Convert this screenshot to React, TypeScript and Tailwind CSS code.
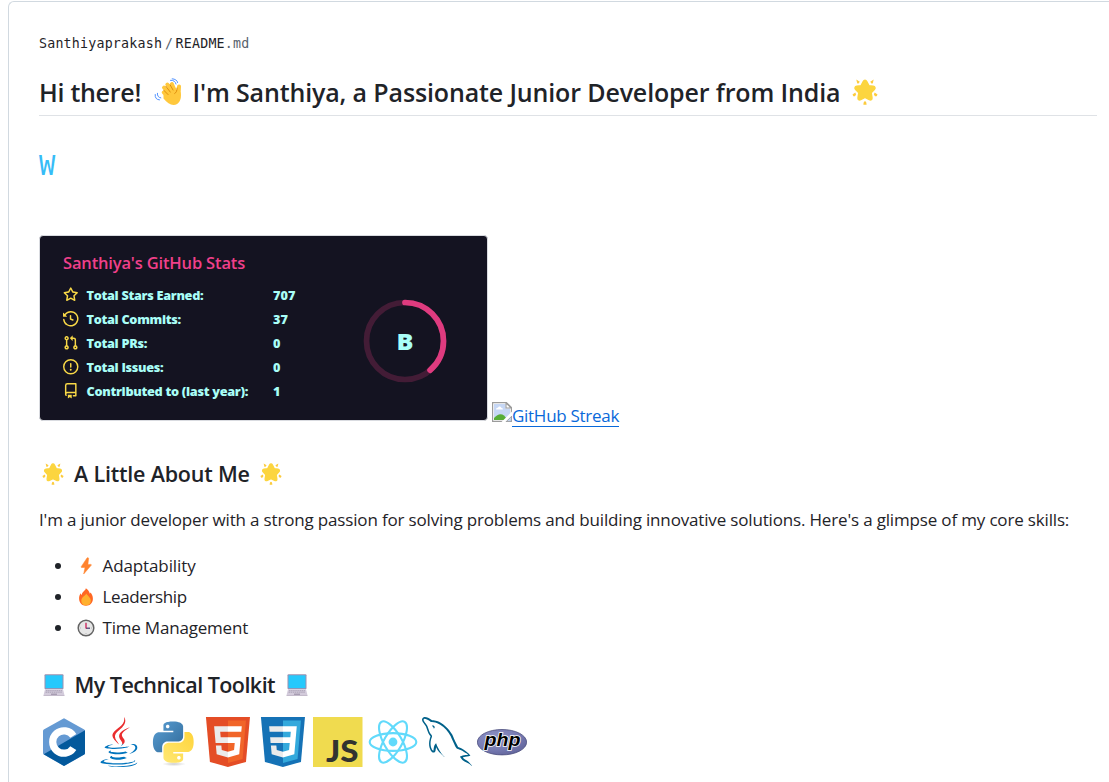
import type { ReactNode } from "react";
import { FaJava } from "react-icons/fa";
import { GrMysql } from "react-icons/gr";

function GlowingStar({ className }: { className: string }) {
  return (
    <svg viewBox="0 0 26 26" className={className}>
      <path
        d="M13 1.2c.8 0 1.3.5 1.700 1.300l2.100 4.200 4.400.7c1.800.3 2.300 1.900 1.100 3.100l-3.200 3.300.8 4.800c.3 1.900-1 2.800-2.600 2L13 18.400l-4.300 2.200c-1.600.8-2.900-.1-2.600-2l.8-4.800-3.200-3.300c-1.200-1.200-.7-2.800 1.100-3.100l4.400-.7 2.100-4.200c.4-.8.9-1.300 1.700-1.300z"
        fill="#fcd53f"
        stroke="#fcd53f"
        strokeWidth="1.600"
      />
      <g fill="#fccb3d">
        <path d="M4.300.6 7.800 2.800 6.200 4.700 5.200 4.300Z" />
        <path d="M21.700.6 18.200 2.800 19.800 4.700 20.800 4.300Z" />
        <path d="M.5 15.500 3.300 13.600 4.100 15.400 3 17.200 1.400 17.300Z" />
        <path d="M25.500 15.500 22.700 13.600 21.900 15.400 23 17.200 24.600 17.300Z" />
        <path d="M13 22.200c.9 0 1.500 1.100 1.600 3.500h-3.200c.1-2.400.7-3.500 1.600-3.500z" />
      </g>
    </svg>
  );
}

function WavingHand({ className }: { className: string }) {
  return (
    <svg viewBox="0 0 28 28" className={className}>
      <g fill="none" stroke="#ffc83d" strokeLinecap="round">
        <path d="M9.700 14.500 16 21M10 9.600 17 17M13.300 6.500 19 14M17.900 6 21 13" strokeWidth="3.900" />
        <path d="M25 8.500 24.600 16" strokeWidth="4" />
      </g>
      <path d="M9.500 17 17.500 9.500 24 12.500 26.700 14.500C28 21 25 27 19.500 27 16 27 13 24.500 9.500 20.500Z" fill="#ffc83d" />
      <g fill="none" stroke="#d67d00" strokeWidth=".8" strokeLinecap="round">
        <path d="m9.800 12.300 4.300 4.300M11.900 8.300l4.400 5.800M16.100 6.800l2.900 5.200M23 10c0 3-.5 4.300-2.300 5.500" />
      </g>
      <g fill="none" stroke="#5092ff" strokeWidth="1" strokeLinecap="round">
        <path d="M16.500 2.300c3-.3 5 1.300 5.500 3.700M18.200.8c3 .2 5 1.500 5.400 3.700M1.200 16.500c-.4 3.300 1.300 5.300 4.300 5.400M3.400 15.300c-.2 2.600 1 4.200 3.400 4.600" />
      </g>
    </svg>
  );
}

function Laptop() {
  return (
    <svg viewBox="0 0 22 22" className="h-[22px] w-[22px]">
      <rect x="1.500" y=".3" width="19" height="15" rx="1" fill="#9a90b0" />
      <rect x="2.500" y="1.300" width="17" height="12.800" fill="#26c9fc" />
      <path d="M2 15.300h18l1.300 5.200v1.200H.7v-1.200z" fill="#d3cbdb" />
      <path d="M3 16.700h16M2.600 18.200h16.800" stroke="#a79eb2" strokeWidth=".9" strokeDasharray="1.500 .6" />
      <path d="M8 20.200h6" stroke="#998ea4" strokeWidth="1.100" />
      <path d="M.5 21.600h21" stroke="#b4abbd" strokeWidth=".7" />
    </svg>
  );
}

function Bolt() {
  return (
    <svg viewBox="0 0 18 18" className="h-[18px] w-[18px]">
      <path d="M10 1 4.200 9.700c-.2.400 0 .8.500.8H8L6.700 17l7.500-8.700c.3-.4.100-.9-.4-.9h-2.900l.7-6c.1-.7-1.100-1.100-1.600-.4z" fill="#ff822d" stroke="#ff822d" strokeWidth=".5" />
    </svg>
  );
}

function Fire() {
  return (
    <svg viewBox="0 0 18 18" className="h-[18px] w-[18px]">
      <path d="M8.800.2c.1 2-3.500 3.500-3.900 6L4.400 7 3.700 5.200C2.600 6.800 2 8.600 2.100 10.800 2.200 15 5 17.800 9 17.800s6.900-2.800 6.900-7c0-2.800-1-4.600-2.400-6.300l-.6 1.200C12.200 3.200 10.800 1.400 8.800.2z" fill="#ff6723" />
      <path d="M9.300 5.500C8.700 7.700 4.300 8.800 4.300 13c0 2.700 2 4.500 4.700 4.500s4.800-1.900 4.800-4.700c0-3.500-3-4.500-4.500-7.300z" fill="#ffb02e" />
    </svg>
  );
}

function Clock() {
  return (
    <svg viewBox="0 0 18 18" className="h-[18px] w-[18px]">
      <circle cx="9" cy="9" r="7.800" fill="#e6e6e6" stroke="#636363" strokeWidth="1.500" />
      <path d="M9 3.200v.8M9 14v.8M3.200 9H4M14 9h.8" stroke="#9b9b9b" strokeWidth=".8" />
      <path d="M9 9.200h4" stroke="#433b6b" strokeWidth="1.200" />
      <path d="M9 9.500V4" stroke="#ca0b4a" strokeWidth="1.200" />
    </svg>
  );
}

function BrokenImage() {
  return (
    <svg viewBox="0 0 20 20" className="h-5 w-5 shrink-0">
      <path d="M.6.6h13.800l5 5v13.800H.6z" fill="#fff" stroke="#9b9b9b" strokeWidth="1.200" />
      <path d="M2 2h11.500v4.500H18V18H2z" fill="#c6d7f5" />
      <path d="M4 7.500c0-1.300 1-2 2-1.800.5-1.500 2.700-1.500 3.200 0 1.200 0 1.700.7 1.700 1.800z" fill="#fff" />
      <path d="M2 18v-2c3.500-4 7-5 10-2.500L16 18z" fill="#57ad37" />
      <path d="M14 1v5h5.200z" fill="#fff" stroke="#9b9b9b" strokeWidth="1.100" />
      <path d="M20 9.500 9.500 20h4L20 13.500z" fill="#fff" />
      <path d="M14.500 19.400h4.900v-4.900z" fill="#c6d7f5" stroke="#9b9b9b" strokeWidth=".8" />
    </svg>
  );
}

const stats: { label: string; value: string; icon: string }[] = [
  {
    label: "Total Stars Earned:",
    value: "707",
    icon: "M8 .25a.75.75 0 01.673.418l1.882 3.815 4.21.612a.75.75 0 01.416 1.279l-3.046 2.97.719 4.192a.75.75 0 01-1.088.791L8 12.347l-3.766 1.98a.75.75 0 01-1.088-.79l.72-4.194L.818 6.374a.75.75 0 01.416-1.28l4.21-.611L7.327.668A.75.75 0 018 .25zm0 2.445L6.615 5.5a.75.75 0 01-.564.41l-3.097.45 2.24 2.184a.75.75 0 01.216.664l-.528 3.084 2.769-1.456a.75.75 0 01.698 0l2.77 1.456-.53-3.084a.75.75 0 01.216-.664l2.24-2.183-3.096-.45a.75.75 0 01-.564-.41L8 2.694v.001z",
  },
  {
    label: "Total Commits:",
    value: "37",
    icon: "M1.643 3.143L.427 1.927A.25.25 0 000 2.104V5.75c0 .138.112.25.25.25h3.646a.25.25 0 00.177-.427L2.715 4.215a6.5 6.5 0 11-1.18 4.458.75.75 0 10-1.493.154 8.001 8.001 0 101.6-5.684zM7.75 4a.75.75 0 01.75.75v2.992l2.028.812a.75.75 0 01-.557 1.392l-2.5-1A.75.75 0 017 8.25v-3.5A.75.75 0 017.75 4z",
  },
  {
    label: "Total PRs:",
    value: "0",
    icon: "M7.177 3.073L9.573.677A.25.25 0 0110 .854v4.792a.25.25 0 01-.427.177L7.177 3.427a.25.25 0 010-.354zM3.75 2.5a.75.75 0 100 1.5.75.75 0 000-1.5zm-2.25.75a2.25 2.25 0 113 2.122v5.256a2.251 2.251 0 11-1.5 0V5.372A2.25 2.25 0 011.5 3.25zM11 2.5h-1V4h1a1 1 0 011 1v5.628a2.251 2.251 0 101.5 0V5A2.5 2.5 0 0011 2.5zm1 10.25a.75.75 0 111.5 0 .75.75 0 01-1.5 0zM3.75 12a.75.75 0 100 1.5.75.75 0 000-1.5z",
  },
  {
    label: "Total Issues:",
    value: "0",
    icon: "M8 1.5a6.5 6.5 0 100 13 6.5 6.5 0 000-13zM0 8a8 8 0 1116 0A8 8 0 010 8zm9 3a1 1 0 11-2 0 1 1 0 012 0zm-.25-6.25a.75.75 0 00-1.5 0v3.5a.75.75 0 001.5 0v-3.5z",
  },
  {
    label: "Contributed to (last year):",
    value: "1",
    icon: "M2 2.5A2.5 2.5 0 014.5 0h8.75a.75.75 0 01.75.75v12.5a.75.75 0 01-.75.75h-2.5a.75.75 0 110-1.5h1.75v-2h-8a1 1 0 00-.714 1.7.75.75 0 01-1.072 1.05A2.495 2.495 0 012 11.5v-9zm10.5-1V9h-8c-.356 0-.694.074-1 .208V2.5a1 1 0 011-1h8zM5 12.25v3.25a.25.25 0 00.4.2l1.45-1.087a.25.25 0 01.3 0L8.600 15.700a.25.25 0 00.4-.2v-3.250a.25.25 0 00-.25-.25h-3.500a.25.25 0 00-.25.25z",
  },
];

function StatsCard() {
  return (
    <div className="flex h-[186px] w-[449px] shrink-0 rounded-[4px] border border-[#d9dbe0] bg-[#141321] pl-[23px]">
      <div className="w-[294px] pt-4">
        <h4 className="h-[22px] whitespace-nowrap text-[16.500px] leading-[22px] font-semibold tracking-[-0.160px] text-[#f0408a]">
          Santhiya's GitHub Stats
        </h4>
        <ul className="pt-[9px]">
          {stats.map((s) => (
            <li
              key={s.label}
              className="flex h-6 items-center whitespace-nowrap text-[12.700px] leading-6 font-extrabold text-[#a9fef7]"
            >
              <svg viewBox="0 0 16 16" className="mr-2 h-[15.500px] w-[15.500px] shrink-0 fill-[#f8d847]" fillRule="evenodd">
                <path d={s.icon} />
              </svg>
              <span className="w-[186.500px] tracking-[-0.300px]">{s.label}</span>
              <span className="tracking-[0.100px]">{s.value}</span>
            </li>
          ))}
        </ul>
      </div>
      <svg viewBox="0 0 90 90" className="mt-[60px] ml-[2.500px] h-[90px] w-[90px]">
        <circle cx="45" cy="45" r="38.500" fill="none" stroke="#fe428e" strokeWidth="5.700" opacity=".2" />
        <circle
          cx="45"
          cy="45"
          r="38.500"
          fill="none"
          stroke="#fe428e"
          strokeWidth="5.700"
          strokeLinecap="round"
          strokeDasharray="93.500 300"
          transform="rotate(-90 45 45)"
          opacity=".84"
        />
        <text
          x="45"
          y="54"
          textAnchor="middle"
          textLength="17"
          lengthAdjust="spacingAndGlyphs"
          className="fill-[#a9fef7] font-['Open_Sans',sans-serif] text-[22.500px] font-extrabold"
        >
          B
        </text>
      </svg>
    </div>
  );
}

function CLogo() {
  return (
    <svg viewBox="0 0 50 50" className="h-[50px] w-[50px]">
      <path d="M25 1.300 45.200 12.500Q46 13 46 14V36q0 1-.8 1.500L25 49 4.800 37.500Q4 37 4 36V14q0-1 .8-1.500z" fill="#659ad3" />
      <path d="M46 13.300V36q0 1-.8 1.500L25 49 4.700 37.200z" fill="#03599c" />
      <path d="M34.300 18.900A11.200 11.200 0 1 0 34.300 31.100" fill="none" stroke="#fff" strokeWidth="7.200" />
    </svg>
  );
}

function JavaLogo() {
  return (
    <div className="grid h-[50px] w-[50px] place-items-center">
      <FaJava className="col-start-1 row-start-1 h-[50px] w-[38px] text-[#0074bd] [clip-path:polygon(0_49%,32%_49%,52%_56%,66%_53%,80%_46%,100%_46%,100%_100%,0_100%)]" />
      <FaJava className="col-start-1 row-start-1 h-[50px] w-[38px] text-[#ea2d2e] [clip-path:polygon(0_0,100%_0,100%_45%,80%_46%,66%_53%,52%_56%,32%_49%,0_48%)]" />
    </div>
  );
}

function PythonLogo() {
  return (
    <svg viewBox="0 0 50 50" className="h-[50px] w-[50px]">
      <defs>
        <linearGradient id="pyBlue" x1="0" y1="0" x2="1" y2="1">
          <stop offset="0" stopColor="#5a9fd4" />
          <stop offset="1" stopColor="#306998" />
        </linearGradient>
        <linearGradient id="pyYellow" x1="0" y1="1" x2="1" y2="0">
          <stop offset="0" stopColor="#ffe873" />
          <stop offset="1" stopColor="#ffd43b" />
        </linearGradient>
        <radialGradient id="pyShadow">
          <stop offset="0" stopColor="#b8b8b8" stopOpacity=".7" />
          <stop offset="1" stopColor="#b8b8b8" stopOpacity="0" />
        </radialGradient>
      </defs>
      <ellipse cx="25" cy="47" rx="12" ry="2.200" fill="url(#pyShadow)" />
      <g transform="translate(4 4.500) scale(1.690 1.720)">
        <path
          fill="url(#pyBlue)"
          d="M14.250.18l.9.2.73.26.59.3.45.32.34.34.25.34.16.33.1.3.04.26.02.2-.01.13V8.500l-.05.63-.13.55-.21.46-.26.38-.3.31-.33.25-.35.19-.35.14-.33.1-.3.07-.26.04-.21.02H8.770l-.69.05-.59.14-.5.22-.41.27-.33.32-.27.35-.2.36-.15.37-.1.35-.07.32-.04.27-.02.21v3.060H3.170l-.21-.03-.28-.07-.32-.12-.35-.18-.36-.26-.36-.36-.35-.46-.32-.59-.28-.73-.21-.88-.14-1.050-.05-1.230.06-1.220.16-1.040.24-.87.32-.71.36-.57.4-.44.42-.33.42-.24.4-.16.36-.1.32-.05.24-.01h.16l.06.01h8.160v-.83H6.180l-.01-2.750-.02-.37.05-.34.11-.31.17-.28.25-.26.31-.23.38-.2.44-.18.51-.15.58-.12.64-.1.71-.06.77-.04.84-.02 1.270.05zm-6.300 1.980l-.23.33-.08.41.08.41.23.34.33.22.41.09.41-.09.33-.22.23-.34.08-.41-.08-.41-.23-.33-.33-.22-.41-.09-.41.09z"
        />
        <path
          fill="url(#pyYellow)"
          d="M21.040 6.110l.28.06.32.12.35.18.36.27.36.35.35.47.32.59.28.73.21.88.14 1.040.05 1.230-.06 1.230-.16 1.040-.24.86-.32.71-.36.57-.4.45-.42.33-.42.24-.4.16-.36.09-.32.05-.24.02-.16-.01h-8.220v.82h5.840l.01 2.760.02.36-.05.34-.11.31-.17.29-.25.25-.31.24-.38.2-.44.17-.51.15-.58.13-.64.09-.71.07-.77.04-.84.01-1.270-.04-1.070-.14-.9-.2-.73-.25-.59-.3-.45-.33-.34-.34-.25-.34-.16-.33-.1-.3-.04-.25-.02-.2.01-.13v-5.340l.05-.64.13-.54.21-.46.26-.38.3-.32.33-.24.35-.2.35-.14.33-.1.3-.06.26-.04.21-.02.13-.01h5.840l.69-.05.59-.14.5-.21.41-.28.33-.32.27-.35.2-.36.15-.36.1-.35.07-.32.04-.28.02-.21V6.070h2.090l.14.01zm-6.470 14.250l-.23.33-.08.41.08.41.23.33.33.23.41.08.41-.08.33-.23.23-.33.08-.41-.08-.41-.23-.33-.33-.23-.41-.08-.41.08z"
        />
      </g>
    </svg>
  );
}

function HtmlLogo() {
  return (
    <svg viewBox="0 0 512 512" className="h-[50px] w-[50px]">
      <path fill="#e44d26" d="M71 460 30 0h451l-41 460-185 52z" />
      <path fill="#f16529" d="m256 472 149-41 35-394H256z" />
      <path fill="#ebebeb" d="M256 208h-75l-5-58h80V94H114l1 15 14 156h127zm0 147-64-17-4-45h-56l8 89 116 32z" />
      <path fill="#fff" d="M255 208v57h70l-7 73-63 17v59l116-32 1-10 13-149 2-15zm0-114v56h137l1-13 3-28 1-15z" />
    </svg>
  );
}

function CssLogo() {
  return (
    <svg viewBox="0 0 512 512" className="h-[50px] w-[50px]">
      <path fill="#1572b6" d="M71 460 30 0h451l-41 460-185 52z" />
      <path fill="#33a9dc" d="m256 472 149-41 35-394H256z" />
      <path fill="#ebebeb" d="M256 94H114l5 56h137zM256 208H124l5 57h127zm0 147-64-17-4-45h-56l8 89 116 32z" />
      <path fill="#fff" d="M255 94h142l-25 288-117 32v-59l63-17 7-73h-70v-57l76-1 5-57h-81z" />
    </svg>
  );
}

function JsLogo() {
  return (
    <svg viewBox="0 0 50 50" className="h-[50px] w-[50px]">
      <rect width="49.500" height="50" fill="#f0db4f" />
      <text
        x="13"
        y="45"
        textLength="32.500"
        lengthAdjust="spacingAndGlyphs"
        className="fill-[#323330] font-['Lato',sans-serif] text-[30.500px] font-black"
      >
        JS
      </text>
    </svg>
  );
}

function ReactLogo() {
  return (
    <svg viewBox="-25 -25 50 50" className="h-[50px] w-[50px]" fill="none" stroke="#61dafb" strokeWidth="2.100">
      <circle r="4.400" fill="#61dafb" stroke="none" />
      <ellipse rx="23.300" ry="8.900" />
      <ellipse rx="23.300" ry="8.900" transform="rotate(60)" />
      <ellipse rx="23.300" ry="8.900" transform="rotate(120)" />
    </svg>
  );
}

function PhpLogo() {
  return (
    <svg viewBox="0 0 50 50" className="h-[50px] w-[50px]">
      <defs>
        <radialGradient id="phpFill" cx=".35" cy=".3" r=".8">
          <stop offset="0" stopColor="#8d90c4" />
          <stop offset=".6" stopColor="#777bb3" />
          <stop offset="1" stopColor="#5f6298" />
        </radialGradient>
      </defs>
      <ellipse cx="25" cy="25.200" rx="24.600" ry="12.700" fill="url(#phpFill)" stroke="#4a4d7c" strokeWidth=".8" />
      <text
        x="7.500"
        y="29"
        textLength="36"
        lengthAdjust="spacingAndGlyphs"
        stroke="#fff"
        strokeWidth="1.600"
        paintOrder="stroke"
        className="fill-black font-['Liberation_Sans',sans-serif] text-[18.500px] font-bold italic"
      >
        php
      </text>
    </svg>
  );
}

function Skill({ icon, label, className }: { icon: ReactNode; label: string; className: string }) {
  return (
    <li className="flex h-[31px] items-center">
      <span className="mr-[15.500px] ml-4 h-[6px] w-[6px] rounded-full bg-[#1f2328]" />
      {icon}
      <span className={className}>{label}</span>
    </li>
  );
}

export default function App() {
  return (
    <div className="h-[782px] overflow-hidden bg-white pt-px pl-2 font-['Open_Sans','Noto_Sans',sans-serif] text-[#1f2328]">
      <main className="h-[790px] rounded-tl-[6px] border-t border-l border-[#d1d9e0] pt-[31px] pr-3 pl-[30px]">
        <div className="flex h-[22px] items-center font-['DejaVu_Sans_Mono',monospace] text-[13.300px] leading-[22px] tracking-[0.200px] text-[#59636e]">
          <span className="text-[#1f2328]">Santhiyaprakash</span>
          <span className="w-[13.500px] pl-[3px]">/</span>
          <span className="text-[#1f2328]">README</span>
          <span>.md</span>
        </div>

        <h1 className="mt-[13px] flex h-12 items-center whitespace-nowrap border-b border-[#dfe2e6] text-[25px] leading-[48px] font-semibold">
          <span className="w-[115px] tracking-[-0.280px]">Hi there!</span>
          <WavingHand className="h-[28px] w-[28px]" />
          <span className="w-[670px] pl-[10.500px] tracking-[-0.140px]">
            I'm Santhiya, a Passionate Junior Developer from India
          </span>
          <GlowingStar className="h-[26px] w-[26px]" />
        </h1>

        <p className="mt-5 h-[60px] font-['DejaVu_Sans_Mono',monospace] text-[27px] leading-[60px] text-[#36bcf7]">W</p>

        <div className="mt-[39px] flex items-end">
          <StatsCard />
          <a className="mb-[-6px] ml-1 flex h-[25px] text-[17px] whitespace-nowrap text-[#0969da]" href="#">
            <BrokenImage />
            <span className="h-[25px] border-b border-[#0969da] leading-[27px] tracking-[-0.280px]">GitHub Streak</span>
          </a>
        </div>

        <h2 className="mt-[39px] flex h-7 items-center whitespace-nowrap pl-[3px] text-[21.500px] leading-7 font-semibold">
          <GlowingStar className="h-[22px] w-[22px]" />
          <span className="w-[196px] pl-2.5 tracking-[-0.200px]">A Little About Me</span>
          <GlowingStar className="h-[22px] w-[22px]" />
        </h2>

        <p className="mt-[18px] h-7 text-[17px] leading-7 whitespace-nowrap tracking-[-0.166px]">
          I'm a junior developer with a strong passion for solving problems and building innovative solutions. Here's a
          glimpse of my core skills:
        </p>

        <ul className="mt-4 text-[17px] leading-[31px]">
          <Skill icon={<Bolt />} label="Adaptability" className="pl-2 tracking-[-0.110px]" />
          <Skill icon={<Fire />} label="Leadership" className="pl-2 tracking-[-0.370px]" />
          <Skill icon={<Clock />} label="Time Management" className="pl-2 tracking-[-0.200px]" />
        </ul>

        <h2 className="mt-7 flex h-7 items-center whitespace-nowrap pl-[3.500px] text-[21.500px] leading-7 font-semibold">
          <Laptop />
          <span className="w-[221px] pl-2.5 tracking-[-0.540px]">My Technical Toolkit</span>
          <Laptop />
        </h2>

        <div className="mt-[18px] flex gap-[4.750px]">
          <CLogo />
          <JavaLogo />
          <PythonLogo />
          <HtmlLogo />
          <CssLogo />
          <JsLogo />
          <ReactLogo />
          <GrMysql className="h-[50px] w-[50px] text-[#00618a]" />
          <PhpLogo />
        </div>
      </main>
    </div>
  );
}
